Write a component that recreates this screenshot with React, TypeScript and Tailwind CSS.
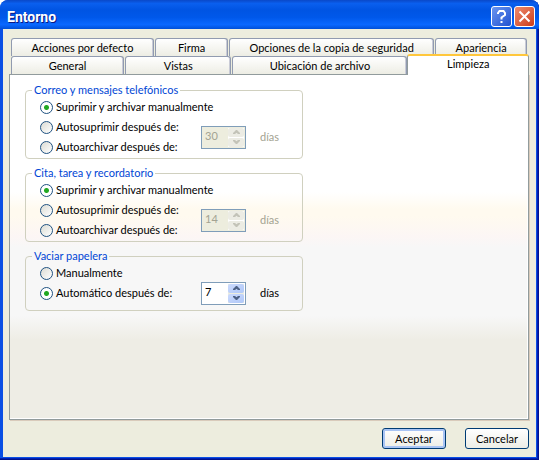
import React, { useState } from 'react';

interface Tab {
  label: string;
  width: string;
}

interface CleanupGroupProps {
  name: string;
  legend: string;
  options: string[];
  selected: number;
  days: number;
}

const backTabs: Tab[] = [
  { label: 'Acciones por defecto', width: 'grow-[143]' },
  { label: 'Firma', width: 'grow-[72]' },
  { label: 'Opciones de la copia de seguridad', width: 'grow-[206]' },
  { label: 'Apariencia', width: 'grow-[91]' },
];

const frontTabs: Tab[] = [
  { label: 'General', width: 'grow-[113]' },
  { label: 'Vistas', width: 'grow-[106]' },
  { label: 'Ubicación de archivo', width: 'grow-[176]' },
];

function TabButton({ label, width }: Tab) {
  return (
    <button
      type="button"
      role="tab"
      aria-selected={false}
      className={`${width} h-[18px] min-w-0 basis-0 rounded-t-[3px] border border-b-0 border-[#919bb0] bg-linear-to-b from-white to-[#ededE4] whitespace-nowrap shadow-[inset_-1px_0_#c9cbd6]`}
    >
      {label}
    </button>
  );
}

function Spinner({ id, value, disabled, onChange }: { id: string; value: number; disabled: boolean; onChange: (v: number) => void }) {
  const step = disabled
    ? 'bg-[#ececE4] text-[#c3c3b8]'
    : 'bg-linear-to-br from-[#cbdafd] to-[#b0c8f8] text-[#4d6185]';

  return (
    <div className={`flex h-[23px] w-[45px] border border-[#7f9db9] p-px ${disabled ? 'bg-[#ededde]' : 'bg-white'}`}>
      <input
        id={id}
        type="text"
        value={value}
        disabled={disabled}
        onChange={(e) => onChange(Number(e.target.value) || 0)}
        className="h-4 w-0 grow bg-transparent pl-0.5 text-black outline-none disabled:text-[#a3a392]"
      />
      <div className={`flex w-4 flex-col gap-px ${disabled ? 'bg-white' : 'bg-[#ededde]'}`}>
        <button type="button" aria-label="Aumentar" disabled={disabled} onClick={() => onChange(value + 1)} className={`flex grow items-center justify-center rounded-xs ${step}`}>
          <svg className="h-1 w-[7px]" viewBox="0 0 7 4" fill="currentColor"><path d="M3 0h1l3 3v1H5L3.500 2.800 2 4H0V3z" /></svg>
        </button>
        <button type="button" aria-label="Reducir" disabled={disabled} onClick={() => onChange(value - 1)} className={`flex grow items-center justify-center rounded-xs ${step}`}>
          <svg className="h-1 w-[7px]" viewBox="0 0 7 4" fill="currentColor"><path d="M3 4h1l3-3V0H5L3.500 1.200 2 0H0v1z" /></svg>
        </button>
      </div>
    </div>
  );
}

function CleanupGroup({ name, legend, options, selected, days }: CleanupGroupProps) {
  const [choice, setChoice] = useState(selected);
  const [amount, setAmount] = useState(days);
  const disabled = choice === 0;

  const renderOption = (label: string, index: number) => (
    <label key={label} className="flex h-5 items-center gap-[3px]">
      <input
        type="radio"
        name={name}
        checked={choice === index}
        onChange={() => setChoice(index)}
        className={`size-[13px] shrink-0 appearance-none rounded-full border border-[#1f5281] ${
          choice === index
            ? 'bg-[radial-gradient(circle,#22a822_2px,#ffffff_3px)]'
            : 'bg-linear-to-br from-[#dcdcd4] to-white'
        }`}
      />
      {label}
    </label>
  );

  return (
    <fieldset className="rounded-[4px] border border-[#d0d0bf] pb-px pl-[14px] last:pb-[7px]">
      <legend className="-ml-2 px-0.5 leading-[14px] text-[#0046d5]">{legend}</legend>
      {renderOption(options[0], 0)}
      <div className="flex items-center">
        <div className="w-[161px]">
          {options.slice(1).map((label, i) => renderOption(label, i + 1))}
        </div>
        <div className="-my-1 flex items-center gap-[14px]">
          <Spinner id={`${name}-days`} value={amount} disabled={disabled} onChange={setAmount} />
          <label htmlFor={`${name}-days`} className={disabled ? 'text-[#a3a392]' : ''}>días</label>
        </div>
      </div>
    </fieldset>
  );
}

export default function App() {
  return (
    <div className="flex min-h-screen flex-col rounded-t-lg bg-[#0a4fe4] font-['Lato',sans-serif] text-[11px] leading-4 text-black shadow-[inset_-1px_-1px_#00138c,inset_-2px_-2px_#0021b5]">
      <header className="flex h-[29px] items-center justify-between rounded-t-lg bg-[linear-gradient(#0a48c8,#0a5fee_12%,#0054e3_35%,#0058ea_60%,#0a68ff_85%,#0050d8)] pt-1 pr-1 pl-[7px]">
        <h1 className="font-['Roboto',sans-serif] text-[14px] leading-4 font-bold text-white [text-shadow:1px_1px_#0a1883]">Entorno</h1>
        <div className="flex gap-0.5">
          <button type="button" aria-label="Ayuda" className="flex size-[21px] items-center justify-center rounded-[3px] border border-white bg-linear-to-br from-[#6b95f0] to-[#2050d0] text-white">
            <svg className="size-[15px]" viewBox="0 0 15 15" fill="none" stroke="currentColor" strokeWidth="2"><path d="M4 5V4l1.500-2h4L11 4v2L7.500 8.500v2M7.500 12v2" /></svg>
          </button>
          <button type="button" aria-label="Cerrar" className="flex size-[21px] items-center justify-center rounded-[3px] border border-white bg-linear-to-br from-[#ee8a6c] to-[#cc3a12] text-white">
            <svg className="size-[15px]" viewBox="0 0 15 15" fill="none" stroke="currentColor" strokeWidth="2"><path d="m2.500 2.500 10 10m0-10-10 10" /></svg>
          </button>
        </div>
      </header>

      <main className="mx-[3px] mb-[3px] flex grow flex-col bg-[#ededde] pt-[9px] pr-[7px] pl-1.5">
        <div role="tablist">
          <div className="flex gap-px px-0.5">
            {backTabs.map((tab) => <TabButton key={tab.label} {...tab} />)}
          </div>
          <div className="flex items-end pl-0.5">
            <div className="flex grow-[398] basis-0 gap-px">
              {frontTabs.map((tab) => <TabButton key={tab.label} {...tab} />)}
            </div>
            <button type="button" role="tab" aria-selected className="relative -mt-0.5 -mb-px h-[21px] grow-[120] basis-0 rounded-t-[3px] border-x border-t-2 border-x-[#919b9c] border-t-[#ffc73c] bg-white pb-1">
              Limpieza
            </button>
          </div>
        </div>

        <form className="flex grow flex-col border border-[#919b9c] bg-[linear-gradient(#ffffff_34%,#fffaef_39%,#fffaef_41%,#fcf6f5_47%,#f7f7f7_50%,#f7f7f7_70%,#eeede5_77%)] px-[15px] pt-2 shadow-[inset_-1px_-1px_#ffffff,1px_1px_#d9cbbb]">
          <div className="flex w-[278px] flex-col gap-[7px]">
            <CleanupGroup name="mail" legend="Correo y mensajes telefónicos" options={['Suprimir y archivar manualmente', 'Autosuprimir después de:', 'Autoarchivar después de:']} selected={0} days={30} />
            <CleanupGroup name="calendar" legend="Cita, tarea y recordatorio" options={['Suprimir y archivar manualmente', 'Autosuprimir después de:', 'Autoarchivar después de:']} selected={0} days={14} />
            <CleanupGroup name="trash" legend="Vaciar papelera" options={['Manualmente', 'Automático después de:']} selected={1} days={7} />
          </div>
        </form>

        <footer className="flex justify-end gap-[19px] py-2">
          <button type="button" className="h-[21px] w-16 rounded-[3px] border border-[#003c74] bg-linear-to-b from-white to-[#ededE6] shadow-[inset_0_0_0_2px_#a9c4f4]">Aceptar</button>
          <button type="button" className="h-[21px] w-16 rounded-[3px] border border-[#003c74] bg-linear-to-b from-white to-[#ededE6]">Cancelar</button>
        </footer>
      </main>
    </div>
  );
}
